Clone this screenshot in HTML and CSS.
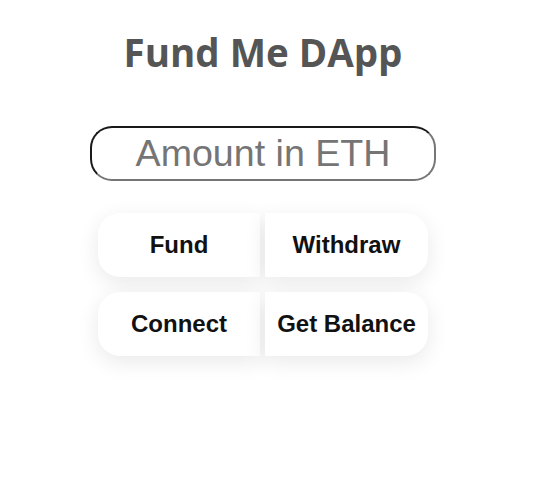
FILE: index.html
```html
<!DOCTYPE html>
<html>
<head>
<meta charset="utf-8">
<link rel="stylesheet" href="styles.css">
</head>
<body>
<main class="app">
  <h1 class="title">Fund Me DApp</h1>
  <input class="amount" type="text" placeholder="Amount in ETH">
  <div class="actions">
    <button class="btn btn-left">Fund</button>
    <button class="btn btn-right">Withdraw</button>
    <button class="btn btn-left">Connect</button>
    <button class="btn btn-right">Get Balance</button>
  </div>
</main>
</body>
</html>
```
FILE: styles.css
```css
html, body {
  margin: 0;
  background: #ffffff;
}
.app {
  display: flex;
  flex-direction: column;
  align-items: center;
  padding: 27px 11px 80px 0;
  font-family: "Liberation Sans", Arial, sans-serif;
}
.title {
  margin: 0;
  font-family: "Open Sans", sans-serif;
  font-weight: 700;
  font-size: 38.5px;
  line-height: 51px;
  color: #555555;
}
.amount {
  box-sizing: border-box;
  margin-top: 48px;
  width: 346px;
  height: 55px;
  border: 2px solid;
  border-color: #1a1a1a #767676 #767676 #1a1a1a;
  border-radius: 22px;
  font-family: "Liberation Sans", Arial, sans-serif;
  font-size: 37.6px;
  text-align: center;
  padding: 0 8px;
  outline: none;
  background: #fff;
}
.amount::placeholder {
  color: #757575;
}
.actions {
  margin-top: 32px;
  display: grid;
  grid-template-columns: 162px 163px;
  column-gap: 5px;
  row-gap: 15px;
}
.btn {
  height: 64px;
  border: none;
  background: #fff;
  font-family: "Liberation Sans", Arial, sans-serif;
  font-weight: 700;
  font-size: 24px;
  color: #111;
  box-shadow: 0 6px 22px rgba(0, 0, 0, 0.09);
  padding: 0;
}
.btn-left {
  border-radius: 22px 0 0 22px;
}
.btn-right {
  border-radius: 0 22px 22px 0;
}
```
